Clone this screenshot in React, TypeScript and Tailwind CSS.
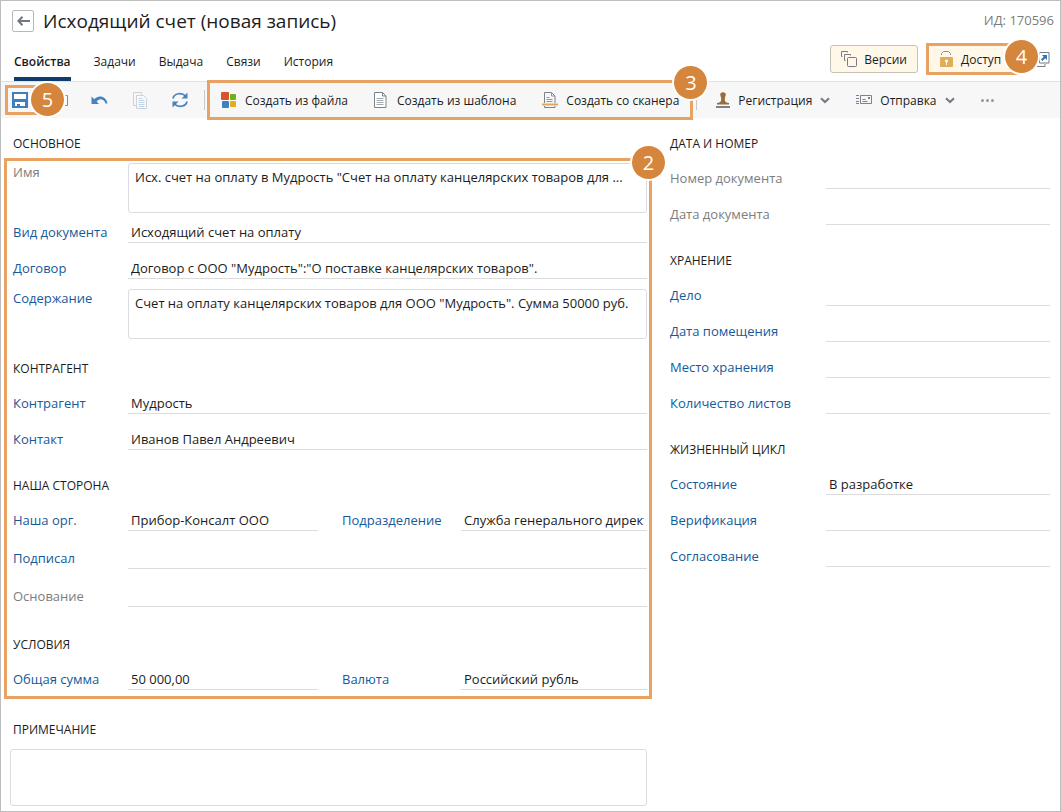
import type { ReactNode } from "react";

const badgeBase =
  "absolute z-10 flex size-[33px] items-center justify-center rounded-full bg-[#d6853d] text-xl leading-none text-white ring-2 ring-white";

function Badge({ n, place }: { n: number; place: string }) {
  return <span className={`${badgeBase} ${place}`}>{n}</span>;
}

function Heading({ children, className = "" }: { children: ReactNode; className?: string }) {
  return <h2 className={`text-xs leading-5 text-[#1c1c1c] ${className}`}>{children}</h2>;
}

type FieldProps = {
  id: string;
  label: string;
  value?: string;
  muted?: boolean;
  labelWidth?: string;
  className?: string;
};

function Field({ id, label, value = "", muted = false, labelWidth = "w-[115px]", className = "" }: FieldProps) {
  return (
    <div className={`flex min-w-0 items-start ${className}`}>
      <label
        htmlFor={id}
        className={`shrink-0 whitespace-nowrap leading-5 ${labelWidth} ${muted ? "text-[#7d7d7d]" : "text-[#135a9c]"}`}
      >
        {label}
      </label>
      <input
        id={id}
        defaultValue={value}
        className="h-[21px] min-w-0 flex-1 border-b border-[#dcdcdc] bg-transparent px-[3px] text-[#1c1c1c] outline-none"
      />
    </div>
  );
}

function AreaField({ id, label, value, muted = false }: FieldProps) {
  return (
    <div className="flex items-start">
      <label
        htmlFor={id}
        className={`w-[115px] shrink-0 leading-[18px] ${muted ? "text-[#7d7d7d]" : "text-[#135a9c]"}`}
      >
        {label}
      </label>
      <textarea
        id={id}
        defaultValue={value}
        className="block h-[50px] min-w-0 flex-1 resize-none overflow-hidden rounded-[3px] border border-[#dadce1] bg-white px-[6px] py-[3px] leading-5 text-[#1c1c1c] outline-none"
      />
    </div>
  );
}

function Chevron() {
  return (
    <svg width="10" height="7" viewBox="0 0 10 7" fill="none" stroke="#707984" strokeWidth="2">
      <path d="M1 1.2 5 5l4-3.8" />
    </svg>
  );
}

function SaveIcon() {
  return (
    <svg width="16" height="16" viewBox="0 0 16 16">
      <path fill="#3f7fbe" d="M0 0h16v16H0z" />
      <path fill="#fff" d="M2 2h12v5H2zM3 10h10v4H8v-2H5v2H3z" />
    </svg>
  );
}

function HiddenPageIcon() {
  return (
    <svg width="16" height="16" viewBox="0 0 16 16" fill="none" stroke="#858d96">
      <path d="M12 3.500h2.500v10H12M2.500 13.500v-10H5" />
    </svg>
  );
}

function UndoIcon() {
  return (
    <svg width="17" height="14" viewBox="0 0 17 14">
      <path d="M.5 3.500v7.500H8L5.600 8.500C7.500 5.500 12.500 4.500 14.800 10.800L16.500 10.200C15 3 7.500 1.500 3.300 6.200z" fill="#4683be" />
    </svg>
  );
}

function CopyIcon() {
  return (
    <svg width="15" height="17" viewBox="0 0 15 17" fill="none" stroke="#cfd2d5">
      <path d="M3.500 13.500h-3V.5h8v2" />
      <path d="M3.500 3.500h7l3 3v10h-10z" fill="#fafafa" />
      <path d="M5.500 6.500h4m-4 2h6m-6 2h6m-6 2h6m-6 2h6" stroke="#bed3e8" />
    </svg>
  );
}

function RefreshIcon() {
  return (
    <svg width="18" height="16" viewBox="0 0 18 16" fill="none" stroke="#4683be" strokeWidth="1.700">
      <path d="M2 6.500C3.200 1 11 .2 14.500 4" />
      <path d="M16 9.500C14.800 15 7 15.800 3.500 12" />
      <path d="M16.500.5v6h-6zM1.500 15.500v-6h6z" fill="#4683be" stroke="none" />
    </svg>
  );
}

function BlocksIcon() {
  return (
    <svg width="16" height="17" viewBox="0 0 16 17">
      <rect x="0" y="0" width="8" height="8" rx="1" fill="#d85430" />
      <rect x="9" y="2" width="6" height="6" rx="1" fill="#6fb214" />
      <rect x="1" y="9" width="7" height="7" rx="1" fill="#4080bf" />
      <rect x="9" y="9" width="6" height="6" rx="1" fill="#e3ac1d" />
    </svg>
  );
}

function PageIcon() {
  return (
    <svg width="13" height="16" viewBox="0 0 13 16" fill="none" stroke="#7a828c">
      <path d="M.5.500h8l3.500 3.500v11.500H.5z" fill="#fff" />
      <path d="M8.500.5V4H12" />
      <path d="M2.500 6.500h7m-7 2h7m-7 2h7m-7 2h7" stroke="#a2a8ae" />
    </svg>
  );
}

function ScanIcon() {
  return (
    <svg width="16" height="16" viewBox="0 0 16 16" fill="none" stroke="#7a828c">
      <path d="M2.500 11V.5h7l3.500 3.500v7M2.500 14v1.500H13V14" />
      <path d="M9.500.5V4H13M4.500 5.500h3m-3 2h6m-6 2h6" stroke="#8f969e" />
      <path d="M0 12.500h16" stroke="#e0aa55" strokeWidth="2" />
    </svg>
  );
}

function StampIcon() {
  return (
    <svg width="14" height="16" viewBox="0 0 14 16">
      <path d="M4.200 2.500C4.200-.6 9.800-.6 9.800 2.500c0 1.500-1 2.500-1 4.500 0 2.500.6 3.500 4.200 4v1.500H1V11c3.600-.5 4.200-1.500 4.200-4 0-2-1-3-1-4.500z" fill="#9a6c3c" />
      <path d="M0 14h14v2H0z" fill="#7a828c" />
    </svg>
  );
}

function SendIcon() {
  return (
    <svg width="16" height="10" viewBox="0 0 16 10" fill="none" stroke="#7a828c">
      <path d="M4.500.5h11v8h-11zM0 .5h3M0 3.500h3M0 6.500h3M0 8.500h3M6.500 6.500h5M6.500 4.500h3" />
      <path d="M12 2h2v2h-2z" fill="#7a828c" stroke="none" />
    </svg>
  );
}

function VersionsIcon() {
  return (
    <svg width="17" height="16" viewBox="0 0 17 16" fill="none" stroke="#737b86">
      <path d="M1.500 5.500h-1V.5h6v1M4.500 9.500h-1v-6h6v1" />
      <rect x="6.500" y="6.500" width="9" height="9" rx="1" />
    </svg>
  );
}

function LockIcon() {
  return (
    <svg width="14" height="16" viewBox="0 0 14 16">
      <path d="M2.500 4V2.500l2-2h5l2 2V4" fill="none" stroke="#8b8f94" />
      <rect x="1" y="6" width="13" height="10" rx="1" fill="#e2ad58" />
      <circle cx="7.500" cy="10" r="1.500" fill="#fff" />
      <path d="M7 10h1v4H7z" fill="#fff" />
    </svg>
  );
}

function OpenIcon() {
  return (
    <svg width="15" height="15" viewBox="0 0 15 15" fill="none" stroke="#737b86">
      <path d="M4.500.5h9.500v10.500H4.500zM2 5H.5v9.500H10V12" />
      <path d="M7 3h5v5l-1.800-1.700L7.400 9 6 7.600l2.700-2.800z" fill="#2f74b8" stroke="none" />
    </svg>
  );
}

const tabs = ["Задачи", "Выдача", "Связи", "История"];

function ToolButton({ icon, text, gap, menu = false }: { icon: ReactNode; text: string; gap: string; menu?: boolean }) {
  return (
    <button className={`flex shrink-0 items-center whitespace-nowrap ${gap}`}>
      {icon}
      <span className="pt-0.5">{text}</span>
      {menu && <Chevron />}
    </button>
  );
}

export default function App() {
  return (
    <div className="min-h-screen overflow-hidden border border-[#bdbdbd] bg-white pb-[5px] font-['Open_Sans','Noto_Sans',sans-serif] text-[13px] text-[#1c1c1c]">
      <header>
        <div className="flex h-[39px] items-center pl-[11px] pr-[6px]">
          <button aria-label="Назад" className="flex size-[22px] items-center justify-center rounded-[2px] border border-[#b9b9b9]">
            <svg width="13" height="10" viewBox="0 0 13 10" fill="none" stroke="#6f7883" strokeWidth="2">
              <path d="M1 5h12M5.500.7 1.300 5l4.200 4.300" />
            </svg>
          </button>
          <h1 className="ml-[9px] text-[19px] leading-7">Исходящий счет (новая запись)</h1>
          <span className="ml-auto text-[13px] text-[#7d7d7d]">ИД: 170596</span>
        </div>
        <div className="flex h-[41px] items-start justify-between pl-[13px] pr-[10px]">
          <nav className="flex h-full gap-[23px] text-xs">
            <a href="#properties" className="flex h-full items-center border-b-4 border-[#0f3d6e] pt-[7px] font-semibold">
              Свойства
            </a>
            {tabs.map((t) => (
              <a key={t} href={`#${t}`} className="flex h-full items-center border-b-4 border-transparent pt-[7px]">
                {t}
              </a>
            ))}
          </nav>
          <div className="flex items-center pt-[3px] text-xs">
            <button className="flex h-7 items-center gap-[6px] rounded-[3px] border border-[#c4c1b8] bg-[#fff8e8] px-[10px]">
              <VersionsIcon />
              <span className="pt-0.5">Версии</span>
            </button>
            <div className="relative ml-2 flex h-8 w-[92px] items-center border-[3px] border-[#e8a364]">
              <button className="flex h-full w-full items-center gap-2 bg-[#fff8e8] pl-[10px]">
                <LockIcon />
                <span className="pt-0.5">Доступ</span>
              </button>
              <Badge n={4} place="-right-[23px] -top-[6px]" />
            </div>
            <a href="#window" aria-label="Открыть в новом окне" className="ml-[17px]">
              <OpenIcon />
            </a>
          </div>
        </div>
      </header>

      <div role="toolbar" className="flex h-[37px] items-center border-t border-[#e0e0e0] bg-[#f7f7f7] text-xs">
        <div className="relative ml-1 flex h-[30px] w-[46px] shrink-0 items-center border-[3px] border-[#e8a364] pl-1">
          <button aria-label="Сохранить">
            <SaveIcon />
          </button>
          <Badge n={5} place="-right-[16px] -top-[5px]" />
        </div>
        <button aria-label="Сохранить и закрыть" className="ml-[2px]">
          <HiddenPageIcon />
        </button>
        <button aria-label="Отменить" className="ml-[22px]">
          <UndoIcon />
        </button>
        <button aria-label="Копировать" className="ml-[25px]">
          <CopyIcon />
        </button>
        <button aria-label="Обновить" className="ml-[23px]">
          <RefreshIcon />
        </button>
        <span className="ml-[15px] h-5 w-px shrink-0 bg-[#c9c9c9]" />
        <div className="relative z-[1] ml-[2px] -my-[2px] flex h-10 shrink-0 items-center gap-[26px] border-[3px] border-[#e8a364] pl-[11px] pr-[11px]">
          <ToolButton icon={<BlocksIcon />} text="Создать из файла" gap="gap-2" />
          <ToolButton icon={<PageIcon />} text="Создать из шаблона" gap="gap-[10px]" />
          <ToolButton icon={<ScanIcon />} text="Создать со сканера" gap="gap-2" />
          <Badge n={3} place="-right-[17px] -top-[17px]" />
        </div>
        <span className="ml-[3px] h-5 w-px shrink-0 bg-[#c9c9c9]" />
        <div className="ml-[19px] flex items-center gap-[26px]">
          <ToolButton icon={<StampIcon />} text="Регистрация" gap="gap-2" menu />
          <ToolButton icon={<SendIcon />} text="Отправка" gap="gap-2" menu />
          <button aria-label="Ещё">
            <svg width="13" height="3" viewBox="0 0 13 3" fill="#8f99a5">
              <circle cx="1.500" cy="1.500" r="1.500" />
              <circle cx="6.500" cy="1.500" r="1.500" />
              <circle cx="11.500" cy="1.500" r="1.500" />
            </svg>
          </button>
        </div>
      </div>

      <main className="grid grid-cols-[651fr_408fr] pt-4">
        <section className="min-w-0">
          <Heading className="pl-3">ОСНОВНОЕ</Heading>
          <div className="relative ml-[3px] mt-1 border-[3px] border-[#e8a364] pb-[6px] pl-[6px] pr-[2px] pt-[2px]">
            <Badge n={2} place="-right-[16px] -top-[15px]" />
            <AreaField id="name" label="Имя" muted value={'Исх. счет на оплату в Мудрость "Счет на оплату канцелярских товаров для ...'} />
            <Field className="mt-[9px]" id="kind" label="Вид документа" value="Исходящий счет на оплату" />
            <Field className="mb-[10px] mt-[15px]" id="contract" label="Договор" value={'Договор с ООО "Мудрость":"О поставке канцелярских товаров".'} />
            <AreaField id="content" label="Содержание" value={'Счет на оплату канцелярских товаров для ООО "Мудрость". Сумма 50000 руб.'} />

            <Heading className="mt-5">КОНТРАГЕНТ</Heading>
            <Field className="mt-[14px]" id="party" label="Контрагент" value="Мудрость" />
            <Field className="mt-[15px]" id="contact" label="Контакт" value="Иванов Павел Андреевич" />

            <Heading className="mt-[26px]">НАША СТОРОНА</Heading>
            <div className="mt-[14px] grid grid-cols-[305fr_305fr] gap-6">
              <Field id="org" label="Наша орг." value="Прибор-Консалт ООО" />
              <Field id="unit" label="Подразделение" labelWidth="w-[119px]" value="Служба генерального директора" />
            </div>
            <Field className="mt-[17px]" id="signed" label="Подписал" />
            <Field className="mt-[17px]" id="basis" label="Основание" muted />

            <Heading className="mt-7">УСЛОВИЯ</Heading>
            <div className="mt-[14px] grid grid-cols-[305fr_305fr] gap-6">
              <Field id="total" label="Общая сумма" value="50 000,00" />
              <Field id="currency" label="Валюта" labelWidth="w-[119px]" value="Российский рубль" />
            </div>
          </div>
          <Heading className="mt-[21px] pl-3">
            <label htmlFor="note">ПРИМЕЧАНИЕ</label>
          </Heading>
          <div className="pl-[9px] pr-[5px] pt-[9px]">
            <textarea id="note" className="block h-[57px] w-full resize-none rounded-[3px] border border-[#dcdcdc] bg-white px-[6px] py-[3px] outline-none" />
          </div>
        </section>

        <section className="flex min-w-0 flex-col gap-[15px] pl-[18px] pr-[10px]">
          <Heading className="-mb-px">ДАТА И НОМЕР</Heading>
          <Field id="number" label="Номер документа" muted labelWidth="w-[156px]" />
          <Field id="date" label="Дата документа" muted labelWidth="w-[156px]" />
          <Heading className="-mb-px mt-[11px]">ХРАНЕНИЕ</Heading>
          <Field id="file" label="Дело" labelWidth="w-[156px]" />
          <Field id="placed" label="Дата помещения" labelWidth="w-[156px]" />
          <Field id="place" label="Место хранения" labelWidth="w-[156px]" />
          <Field id="sheets" label="Количество листов" labelWidth="w-[156px]" />
          <Heading className="-mb-px mt-[11px]">ЖИЗНЕННЫЙ ЦИКЛ</Heading>
          <Field id="state" label="Состояние" labelWidth="w-[156px]" value="В разработке" />
          <Field id="verify" label="Верификация" labelWidth="w-[156px]" />
          <Field id="approve" label="Согласование" labelWidth="w-[156px]" />
        </section>
      </main>
    </div>
  );
}
